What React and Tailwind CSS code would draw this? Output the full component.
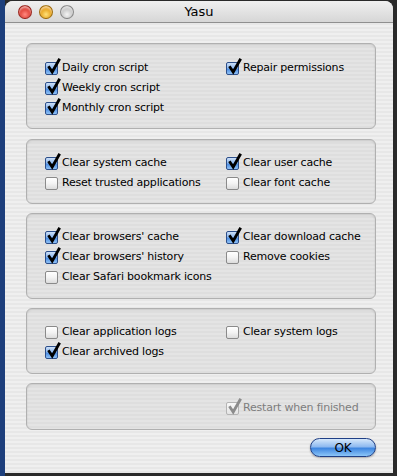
import React from 'react';

const stripes =
  'bg-[repeating-linear-gradient(to_bottom,#efefef_0px,#efefef_2px,#e7e7e7_2px,#e7e7e7_4px)]';
const boxStripes =
  'bg-[repeating-linear-gradient(to_bottom,#e4e4e4_0px,#e4e4e4_2px,#dedede_2px,#dedede_4px)]';

const Check = ({ color }) => (
  <svg className="absolute left-[1px] top-[-5px]" width="14" height="17" viewBox="0 0 14 17">
    <path d="M2.2 9.5 L5.2 14 L12 2" fill="none" stroke={color} strokeWidth="2.8" strokeLinecap="square" />
  </svg>
);

const Checkbox = ({ checked, disabled, label }) => {
  let box = 'border-[#8a8a8a] bg-[linear-gradient(to_bottom,#ffffff,#f3f3f3_50%,#dcdcdc)]';
  if (checked && !disabled)
    box = 'border-[#2d4f8a] bg-[linear-gradient(to_bottom,#cde0f8,#8db8ee_45%,#4d8ee3_55%,#8fc1f5)]';
  if (disabled) box = 'border-[#b4b4b4] bg-[linear-gradient(to_bottom,#f8f8f8,#e4e4e4)]';
  return (
    <div className="flex items-center h-[20px] gap-[4px]">
      <div className={`relative shrink-0 w-[13px] h-[13px] rounded-[2px] border ${box}`}>
        {checked && <Check color={disabled ? '#8c8c8c' : '#000'} />}
      </div>
      <span className={`whitespace-nowrap ${disabled ? 'text-[#7d7d7d]' : 'text-black'}`}>{label}</span>
    </div>
  );
};

const Group = ({ h, pt = '', children }) => (
  <div
    className={`${h} ${pt} ${boxStripes} rounded-[6px] border border-[#b0b0b0] shadow-[inset_0_1px_2px_rgba(0,0,0,0.12)] flex flex-col justify-center pl-[18px]`}
  >
    <div className="grid grid-cols-[181px_1fr]">{children}</div>
  </div>
);

const Light = ({ c }) => (
  <div
    className={`w-[14px] h-[14px] rounded-full border border-black/30 ${c} shadow-[inset_0_2px_2px_rgba(255,255,255,0.6)]`}
  />
);

export default function App() {
  return (
    <div className="w-[397px] h-[476px] bg-[#2a2a2a] flex" style={{ fontFamily: '"DejaVu Sans", sans-serif' }}>
      <div className="w-[5px] bg-[#1d3f7c]" />
      <div className={`w-[388px] h-[472px] mt-[1px] rounded-t-[8px] overflow-hidden ${stripes} flex flex-col`}>
        <div className="h-[22px] relative flex items-center px-[13px] gap-[7px] bg-[linear-gradient(to_bottom,#f0f0f0,#d6d6d6)] border-b border-[#8f8f8f]">
          <Light c="bg-[radial-gradient(circle_at_50%_70%,#ff8a80,#d4271c_70%)]" />
          <Light c="bg-[radial-gradient(circle_at_50%_70%,#ffe17a,#e09000_70%)]" />
          <Light c="bg-[radial-gradient(circle_at_50%_70%,#f4f4f4,#b9b9b9_70%)]" />
          <div className="absolute inset-0 flex items-center justify-center text-[13px] text-black">Yasu</div>
        </div>
        <div className="flex flex-col gap-[9px] pl-[21px] pr-[17px] pt-[20px] text-[11px] tracking-[-0.2px]">
          <Group h="h-[86px]" pt="pt-[5px]">
            <Checkbox checked label="Daily cron script" />
            <Checkbox checked label="Repair permissions" />
            <Checkbox checked label="Weekly cron script" />
            <div />
            <Checkbox checked label="Monthly cron script" />
          </Group>
          <div className="mt-[1px]">
            <Group h="h-[65px]" pt="pt-[4px]">
              <Checkbox checked label="Clear system cache" />
              <Checkbox checked label="Clear user cache" />
              <Checkbox label="Reset trusted applications" />
              <Checkbox label="Clear font cache" />
            </Group>
          </div>
          <Group h="h-[86px]" pt="pt-[3px]">
            <Checkbox checked label="Clear browsers' cache" />
            <Checkbox checked label="Clear download cache" />
            <Checkbox checked label="Clear browsers' history" />
            <Checkbox label="Remove cookies" />
            <Checkbox label="Clear Safari bookmark icons" />
          </Group>
          <Group h="h-[66px]" pt="pt-[2px]">
            <Checkbox label="Clear application logs" />
            <Checkbox label="Clear system logs" />
            <Checkbox checked label="Clear archived logs" />
          </Group>
          <Group h="h-[47px]" pt="pt-[3px]">
            <div />
            <Checkbox checked disabled label="Restart when finished" />
          </Group>
          <div className="flex justify-end mt-[-1px]">
            <button className="w-[66px] h-[19px] rounded-full border border-[#1f3f86] bg-[linear-gradient(to_bottom,#d6e8fb,#8fbaf0_45%,#3f86e0_55%,#8cc6f8)] text-[12px] text-black leading-none shadow-[0_1px_2px_rgba(0,0,0,0.3)]">
              OK
            </button>
          </div>
        </div>
      </div>
    </div>
  );
}
